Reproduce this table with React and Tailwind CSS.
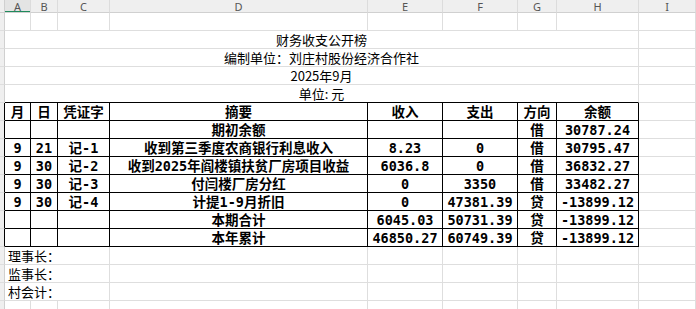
import React from 'react';

const GRID = 'grid grid-cols-[5px_26px_27px_52px_258px_75px_75px_39px_82px_1fr]';
const LINE = 'border-r border-b border-[#dedede]';

const tableRows = [
  ['月', '日', '凭证字', '摘要', '收入', '支出', '方向', '余额'],
  ['', '', '', '期初余额', '', '', '借', '30787.24'],
  ['9', '21', '记-1', '收到第三季度农商银行利息收入', '8.23', '0', '借', '30795.47'],
  ['9', '30', '记-2', '收到2025年阎楼镇扶贫厂房项目收益', '6036.8', '0', '借', '36832.27'],
  ['9', '30', '记-3', '付闫楼厂房分红', '0', '3350', '借', '33482.27'],
  ['9', '30', '记-4', '计提1-9月折旧', '0', '47381.39', '贷', '-13899.12'],
  ['', '', '', '本期合计', '6045.03', '50731.39', '贷', '-13899.12'],
  ['', '', '', '本年累计', '46850.27', '60749.39', '贷', '-13899.12'],
];

const titles = ['财务收支公开榜', '编制单位：刘庄村股份经济合作社', '2025年9月', '单位: 元'];
const signers = ['理事长：', '监事长：', '村会计：'];

function RowHead({ dark }) {
  return (
    <div
      className={`h-[18px] bg-[#efefef] border-b border-[#dedede] border-r ${
        dark ? 'border-r-black' : 'border-r-[#d0d0d0]'
      }`}
    />
  );
}

export default function App() {
  return (
    <div className="w-[696px] h-[309px] overflow-hidden bg-white text-black font-['Noto_Sans_CJK_SC',sans-serif]">
      {/* column letters */}
      <div className={`${GRID} h-[13px] bg-[#efefef] text-[11px] leading-[11px] text-[#555] font-['Noto_Sans','Noto_Sans_CJK_SC',sans-serif]`}>
        <div className="border-r border-b border-[#d0d0d0]" />
        {['A', 'B', 'C', 'D', 'E', 'F', 'G', 'H', 'I'].map((l) => (
          <div
            key={l}
            className={`flex items-center justify-center border-r border-b border-r-[#dcdcdc] border-b-[#d0d0d0] ${
              l === 'A' ? 'bg-[#e4e4e4] shadow-[inset_0_-1px_0_#1f8a5c] border-b-[#1f8a5c]' : ''
            }`}
          >
            <span>{l}</span>
          </div>
        ))}
      </div>

      {/* empty first row */}
      <div className={GRID}>
        <RowHead />
        {Array.from({ length: 9 }).map((_, i) => (
          <div key={i} className={`h-[18px] ${LINE}`} />
        ))}
      </div>

      {/* title rows */}
      {titles.map((t, i) => (
        <div key={t} className={GRID}>
          <RowHead />
          <div
            className={`col-span-8 h-[18px] flex items-end justify-center text-[13px] leading-[16px] border-r border-b border-r-[#dedede] ${
              i === titles.length - 1 ? 'border-b-black' : 'border-b-[#dedede]'
            }`}
          >
            {t}
          </div>
          <div className={`h-[18px] ${LINE}`} />
        </div>
      ))}

      {/* ledger table */}
      {tableRows.map((r, ri) => (
        <div key={ri} className={GRID}>
          <RowHead dark />
          {r.map((c, ci) => (
            <div
              key={ci}
              className="h-[18px] flex items-center justify-center whitespace-nowrap border-r border-b border-black text-[13.5px] leading-[18px] font-bold font-['DejaVu_Sans_Mono','Noto_Sans_CJK_SC',monospace]"
            >
              {c}
            </div>
          ))}
          <div className={`h-[18px] ${LINE}`} />
        </div>
      ))}

      {/* signatures */}
      {signers.map((s) => (
        <div key={s} className={GRID}>
          <RowHead />
          <div className={`col-span-3 h-[18px] flex items-center pl-[3px] text-[13px] leading-[18px] whitespace-nowrap ${LINE}`}>
            {s}
          </div>
          {Array.from({ length: 6 }).map((_, i) => (
            <div key={i} className={`h-[18px] ${LINE}`} />
          ))}
        </div>
      ))}

      {/* trailing empty row */}
      <div className={GRID}>
        <RowHead />
        {Array.from({ length: 9 }).map((_, i) => (
          <div key={i} className={`h-[18px] ${LINE}`} />
        ))}
      </div>
    </div>
  );
}
